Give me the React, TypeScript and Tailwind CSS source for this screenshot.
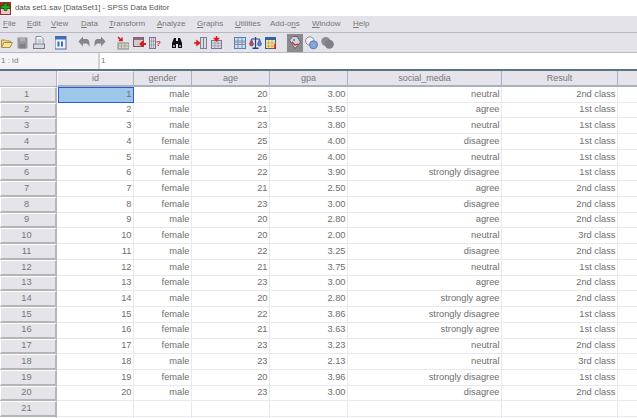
import React from "react";

const rows: [string, string, string, string, string, string, string][] = [
  ["1","1","male","20","3.00","neutral","2nd class"],
  ["2","2","male","21","3.50","agree","1st class"],
  ["3","3","male","23","3.80","neutral","1st class"],
  ["4","4","female","25","4.00","disagree","1st class"],
  ["5","5","male","26","4.00","neutral","1st class"],
  ["6","6","female","22","3.90","strongly disagree","1st class"],
  ["7","7","female","21","2.50","agree","2nd class"],
  ["8","8","female","23","3.00","disagree","2nd class"],
  ["9","9","male","20","2.80","agree","2nd class"],
  ["10","10","female","20","2.00","neutral","3rd class"],
  ["11","11","male","22","3.25","disagree","2nd class"],
  ["12","12","male","21","3.75","neutral","1st class"],
  ["13","13","female","23","3.00","agree","2nd class"],
  ["14","14","male","20","2.80","strongly agree","2nd class"],
  ["15","15","female","22","3.86","strongly disagree","1st class"],
  ["16","16","female","21","3.63","strongly agree","1st class"],
  ["17","17","female","23","3.23","neutral","2nd class"],
  ["18","18","male","23","2.13","neutral","3rd class"],
  ["19","19","female","20","3.96","strongly disagree","1st class"],
  ["20","20","male","23","3.00","disagree","2nd class"],
  ["21","","","","","",""],
  ["","","","","","",""],
];

const gridCols = "grid grid-cols-[57px_77px_58px_78px_78px_154px_116px_19px]";

const menus: { pre: string; u: string; post: string; w: string }[] = [
  { pre: "", u: "F", post: "ile", w: "w-[24px]" },
  { pre: "", u: "E", post: "dit", w: "w-[24px]" },
  { pre: "", u: "V", post: "iew", w: "w-[30px]" },
  { pre: "", u: "D", post: "ata", w: "w-[28px]" },
  { pre: "", u: "T", post: "ransform", w: "w-[48px]" },
  { pre: "", u: "A", post: "nalyze", w: "w-[40px]" },
  { pre: "", u: "G", post: "raphs", w: "w-[38px]" },
  { pre: "", u: "U", post: "tilities", w: "w-[35px]" },
  { pre: "Add-o", u: "n", post: "s", w: "w-[42px]" },
  { pre: "", u: "W", post: "indow", w: "w-[41px]" },
  { pre: "", u: "H", post: "elp", w: "w-[24px]" },
];

function Ico({ w = 14, children, cls = "" }: { w?: number; children: React.ReactNode; cls?: string }) {
  return (
    <svg width={w} height={14} viewBox={`0 0 ${w} 14`} className={"shrink-0 " + cls}>
      {children}
    </svg>
  );
}

function TableIcon({ x = 3, y = 3, w = 9, h = 10 }: { x?: number; y?: number; w?: number; h?: number }) {
  return (
    <g>
      <rect x={x} y={y} width={w} height={h} fill="#dcdce6" stroke="#77778c" strokeWidth="1" />
      <path d={`M${x + w / 3} ${y}v${h}M${x + (2 * w) / 3} ${y}v${h}M${x} ${y + h / 3}h${w}M${x} ${y + (2 * h) / 3}h${w}`} stroke="#8f8fa0" strokeWidth="0.7" />
    </g>
  );
}

export default function App() {
  return (
    <div className="w-[637px] h-[418px] overflow-hidden bg-white font-['Liberation_Sans',Arial,sans-serif] text-[#6e6e6e]">
      {/* Title bar */}
      <div className="h-[16px] flex items-center bg-white">
        <svg width="11" height="13" viewBox="0 0 11 13" className="ml-0 shrink-0">
          <rect x="0" y="0" width="11" height="13" fill="#a52a2a" />
          <rect x="1" y="7" width="9" height="5" fill="#e8c8c8" />
          <path d="M4 1h3v2.500h3v3h-3v2h-3v-2h-3v-3h3z" fill="#18b018" stroke="#0b3d0b" strokeWidth="0.6" />
        </svg>
        <span className="ml-[4px] text-[7.8px] leading-none text-[#555] whitespace-nowrap">data set1.sav [DataSet1] - SPSS Data Editor</span>
      </div>

      {/* Menu bar */}
      <div className="h-[16px] flex items-center pl-[3px] bg-[#e3e3e9] text-[8px] leading-none text-[#777]">
        {menus.map((m) => (
          <span key={m.u + m.post} className={m.w + " shrink-0 whitespace-nowrap"}>
            {m.pre}
            <span className="underline">{m.u}</span>
            {m.post}
          </span>
        ))}
      </div>

      {/* Toolbar */}
      <div className="h-[21px] flex items-center pl-[1px] bg-[#e3e3e9] border-y border-[#b9b9c1]">
        <Ico w={12}>
          <path d="M0.500 11V4h4l1 1h4v2" fill="#f2d276" stroke="#a89048" />
          <path d="M0.500 11.500l2.500-5h8.500l-2.500 5z" fill="#f7e29c" stroke="#a89048" />
        </Ico>
        <Ico w={11} cls="ml-[4px]">
          <path d="M0.500 1.500h10v11h-10z" fill="#96969c" />
          <rect x="3" y="1.500" width="5" height="4" fill="#aeaeb4" />
          <rect x="2.500" y="8" width="6" height="4.500" fill="#808086" />
        </Ico>
        <Ico w={12} cls="ml-[5px]">
          <path d="M3 0.500h5l2 2v6H3z" fill="#fff" stroke="#888" />
          <rect x="0.500" y="8" width="11" height="4.500" fill="#d8d8e0" stroke="#7a7a88" />
          <path d="M4.500 4h4M4.500 6h4" stroke="#7f9fd0" />
        </Ico>
        <Ico w={12} cls="ml-[10px]">
          <rect x="0" y="0.500" width="11" height="12.500" fill="#f2f2f6" stroke="#4a6a9f" />
          <rect x="0" y="0.500" width="11" height="3" fill="#3a70b8" />
          <rect x="2.500" y="5.500" width="2" height="5" fill="#3a70b8" />
          <rect x="6" y="5.500" width="2" height="5" fill="#3a70b8" />
        </Ico>
        <Ico w={12} cls="ml-[11px]">
          <path d="M5 3H8c2.500 0 3.500 2 3.500 4.500V11C10.500 8.500 9.500 7.500 8 7.500H5V10.500L0.500 5.500 5 0.500z" fill="#85858c" />
        </Ico>
        <Ico w={12} cls="ml-[4px]">
          <path d="M7 3H4C1.500 3 0.500 5 0.500 7.500V11C1.500 8.500 2.500 7.500 4 7.500H7V10.500L11.500 5.500 7 0.500z" fill="#85858c" />
        </Ico>
        <Ico w={12} cls="ml-[11px]">
          <path d="M1 1l3 3M2 4.500h3v-3" stroke="#d81818" strokeWidth="1.500" fill="none" />
          <rect x="1" y="7" width="11" height="6" fill="#d9d6c6" stroke="#888" />
          <path d="M4.500 7v6M8 7v6M1 10h11" stroke="#999" strokeWidth="0.7" />
        </Ico>
        <Ico w={13} cls="ml-[4px]">
          <rect x="0.500" y="1.500" width="10" height="9" fill="#dcc8c8" stroke="#6a5a6a" />
          <rect x="0.500" y="1.500" width="10" height="2.500" fill="#8a6f80" />
          <path d="M13 8H8M10 5.500L7.500 8l2.500 2.500" stroke="#e01818" strokeWidth="1.800" fill="none" />
        </Ico>
        <Ico w={12} cls="ml-[3px]">
          <TableIcon x={0.5} y={1.5} w={6} h={11} />
          <text x="7" y="10" fontSize="8" fontWeight="700" fill="#d81818" fontFamily="Liberation Sans">?</text>
        </Ico>
        <Ico w={12} cls="ml-[10px]">
          <path d="M1 12V7l2-5h2v3h2V2h2l2 5v5H7V8H5v4z" fill="#111" />
          <rect x="2" y="9" width="2" height="2" fill="#9090b0" />
          <rect x="8" y="9" width="2" height="2" fill="#9090b0" />
        </Ico>
        <Ico w={13} cls="ml-[11px]">
          <path d="M0 7h5M3 5l2.500 2L3 9z" stroke="#e01818" strokeWidth="1.500" fill="#e01818" />
          <rect x="6.500" y="1.500" width="6" height="11" fill="#dcdce4" stroke="#7f7f90" />
          <path d="M9.500 1.500v11" stroke="#7f7f90" />
        </Ico>
        <Ico w={11} cls="ml-[4px]">
          <TableIcon x={0.5} y={4.5} w={10} h={8} />
          <path d="M5.500 0v5M3.500 2.500l2 2.500 2-2.500z" stroke="#e01818" strokeWidth="1.300" fill="#e01818" />
        </Ico>
        <Ico w={12} cls="ml-[12px]">
          <rect x="0.500" y="1.500" width="11" height="11" fill="#cfe0f0" stroke="#5580b0" />
          <path d="M0.500 5h11M0.500 8.500h11" stroke="#7090b8" />
          <path d="M0.500 6.700h11" stroke="#d07070" strokeWidth="0.700" />
          <path d="M4 1.500v11M8 1.500v11" stroke="#7090b8" />
        </Ico>
        <Ico w={13} cls="ml-[3px]">
          <path d="M6.500 1v11M2.500 3h8" stroke="#23408a" strokeWidth="1.200" />
          <path d="M0.500 8l2-5 2 5a2 2 0 0 1-4 0z" fill="#d84040" stroke="#23408a" strokeWidth="0.500" />
          <path d="M8.500 8l2-5 2 5a2 2 0 0 1-4 0z" fill="#5080d0" stroke="#23408a" strokeWidth="0.500" />
          <rect x="3.500" y="11.500" width="6" height="1.500" fill="#23408a" />
        </Ico>
        <Ico w={12} cls="ml-[3px]">
          <rect x="0.500" y="1.500" width="10" height="11" fill="#f6e6a8" stroke="#3a5a98" />
          <rect x="0.500" y="1.500" width="10" height="2.500" fill="#2e64b0" />
          <path d="M3.500 4v8.500M7 4v8.500M0.500 7h10M0.500 10h10" stroke="#c89840" strokeWidth="0.700" />
          <path d="M10 8v5" stroke="#e01818" strokeWidth="1.500" />
        </Ico>
        {/* active button */}
        <div className="ml-[10px] w-[16px] h-[18px] bg-[#8b8b8f] flex items-center justify-center shrink-0">
          <Ico w={12}>
            <path d="M0.500 4L4 0.500h4L11.500 6 6 12.500z" fill="#d4d4dc" stroke="#44444c" strokeWidth="0.700" />
            <path d="M3 6l3 3 3-1" stroke="#d02020" strokeWidth="1.200" fill="none" />
            <path d="M4 4h2" stroke="#2040a0" strokeWidth="1.200" />
          </Ico>
        </div>
        <Ico w={13} cls="ml-[2px]">
          <circle cx="4.800" cy="5" r="4.200" fill="#eef0f6" stroke="#8a8a94" />
          <circle cx="8.500" cy="8.800" r="4" fill="#86a8d8" stroke="#5a7ab0" />
        </Ico>
        <Ico w={13} cls="ml-[3px]">
          <circle cx="4.800" cy="5.500" r="4.500" fill="#8c8c90" />
          <circle cx="8.300" cy="8.300" r="4.500" fill="#808084" />
        </Ico>
      </div>

      {/* Cell editor bar */}
      <div className="h-[16px] flex items-stretch bg-white text-[8px] leading-none">
        <div className="w-[100px] flex items-center pl-[1px] bg-[#f4f4f6] border-r-2 border-[#d0d0d4] text-[#777]">1 : id</div>
        <div className="flex-1 flex items-center pl-[1px] text-[#777]">1</div>
      </div>

      {/* Grid */}
      <div className="border-t-2 border-[#5f7286] text-[9.3px] leading-none">
        <div className={gridCols + " h-[16px] text-[9px]"}>
          <div className="bg-[#e4e4ea] border-b border-r border-[#b4b4c0]" />
          {["id", "gender", "age", "gpa", "social_media", "Result"].map((h, i) => (
            <div
              key={h}
              className={
                "flex items-center justify-center bg-[#e4e4ea] border-b-2 border-[#a9b0c0] border-r text-[#777] " +
                (i === 0 ? "border-l border-t border-l-[#f8f8fa] border-t-[#f8f8fa]" : "")
              }
            >
              {h}
            </div>
          ))}
          <div className="bg-[#e4e4ea] border-b-2 border-[#a9b0c0]" />
        </div>
        {rows.map((r, idx) => (
          <div key={idx} className={gridCols + " h-[15.72px]"}>
            <div className="flex items-center justify-center pr-[3px] bg-[#e4e4e9] border-t border-l border-white border-b-2 border-b-[#b4b4bc] border-r-2 border-r-[#b4b4bc] text-[#777]">
              {r[0]}
            </div>
            {r.slice(1).map((c, i) => (
              <div
                key={i}
                className={
                  "flex items-center justify-end pr-[1.500px] border-b border-r border-[#e8e8ee] " +
                  (idx === 0 && i === 0 ? "bg-[#9cc6ea] !border !border-[#3658c8] ml-[1px]" : "bg-white")
                }
              >
                {c}
              </div>
            ))}
            <div className="border-b border-[#e8e8ee]" />
          </div>
        ))}
      </div>
    </div>
  );
}
